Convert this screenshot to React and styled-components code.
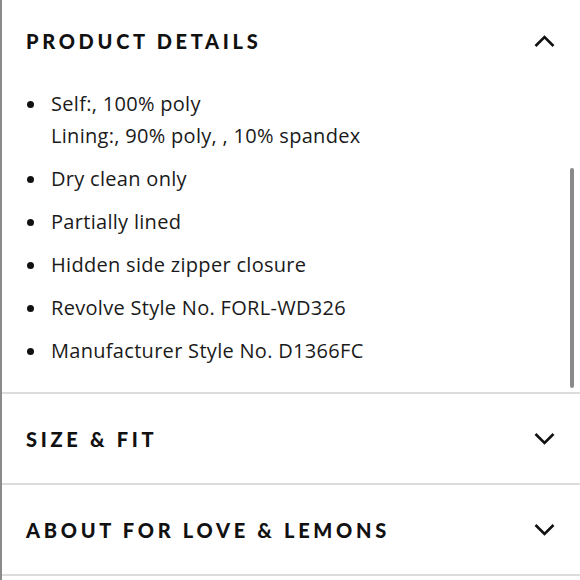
import React from "react";
import styled, { createGlobalStyle } from "styled-components";

const GlobalStyle = createGlobalStyle`
  html, body {
    margin: 0;
    padding: 0;
    background: #fff;
  }
  body {
    font-family: "Open Sans", "Liberation Sans", sans-serif;
    color: #111;
  }
`;

const details = [
  ["Self:, 100% poly", "Lining:, 90% poly, , 10% spandex"],
  ["Dry clean only"],
  ["Partially lined"],
  ["Hidden side zipper closure"],
  ["Revolve Style No. FORL-WD326"],
  ["Manufacturer Style No. D1366FC"]
];

const Chevron = ({ up }) => (
  <ChevronSvg viewBox="0 0 21 13" $up={up}>
    <path d="M1.5 2 L10.5 11 L19.5 2" fill="none" stroke="#111" strokeWidth="2.6" />
  </ChevronSvg>
);

const App = () => (
  <Page>
    <GlobalStyle />
    <Section>
      <Header $height={82}>
        <Title>PRODUCT DETAILS</Title>
        <Chevron up />
      </Header>
      <List>
        {details.map((lines, i) => (
          <Item key={i}>
            <Bullet />
            <ItemText>
              {lines.map(line => (
                <Line key={line}>{line}</Line>
              ))}
            </ItemText>
          </Item>
        ))}
      </List>
    </Section>
    <Section>
      <Header $height={89}>
        <Title>SIZE &amp; FIT</Title>
        <Chevron />
      </Header>
    </Section>
    <Section>
      <Header $height={89}>
        <Title>ABOUT FOR LOVE &amp; LEMONS</Title>
        <Chevron />
      </Header>
    </Section>
    <Scrollbar />
  </Page>
);

const Page = styled.div`
  position: relative;
  width: 580px;
  height: 580px;
  overflow: hidden;
  border-left: 2px solid #8a8a8a;
  box-sizing: border-box;
`;

const Section = styled.section`
  border-bottom: 2px solid #dcdcdc;
`;

const Header = styled.div`
  display: flex;
  align-items: center;
  justify-content: space-between;
  height: ${p => p.$height}px;
  padding: 0 25px 0 24px;
`;

const Title = styled.h2`
  margin: 0;
  font-family: "Lato", "Liberation Sans", sans-serif;
  font-weight: 900;
  font-size: 20px;
  letter-spacing: 0.185em;
  color: #111;
`;

const ChevronSvg = styled.svg`
  width: 21px;
  height: 13px;
  transform: ${p => (p.$up ? "rotate(180deg)" : "none")};
`;

const List = styled.ul`
  list-style: none;
  margin: 0;
  padding: 6px 0 25px 23px;
  display: flex;
  flex-direction: column;
  gap: 11px;
`;

const Item = styled.li`
  display: flex;
  align-items: flex-start;
`;

const Bullet = styled.span`
  flex: none;
  width: 7px;
  height: 7px;
  margin: 13px 17px 0 2px;
  border-radius: 50%;
  background: #111;
`;

const ItemText = styled.div`
  display: flex;
  flex-direction: column;
`;

const Line = styled.span`
  font-family: "Open Sans", "Liberation Sans", sans-serif;
  font-size: 20px;
  letter-spacing: 0.3px;
  line-height: 32px;
  color: #1a1a1a;
`;

const Scrollbar = styled.div`
  position: absolute;
  top: 168px;
  right: 6px;
  width: 4px;
  height: 220px;
  border-radius: 2px;
  background: #8a8a8a;
`;

export default App;
